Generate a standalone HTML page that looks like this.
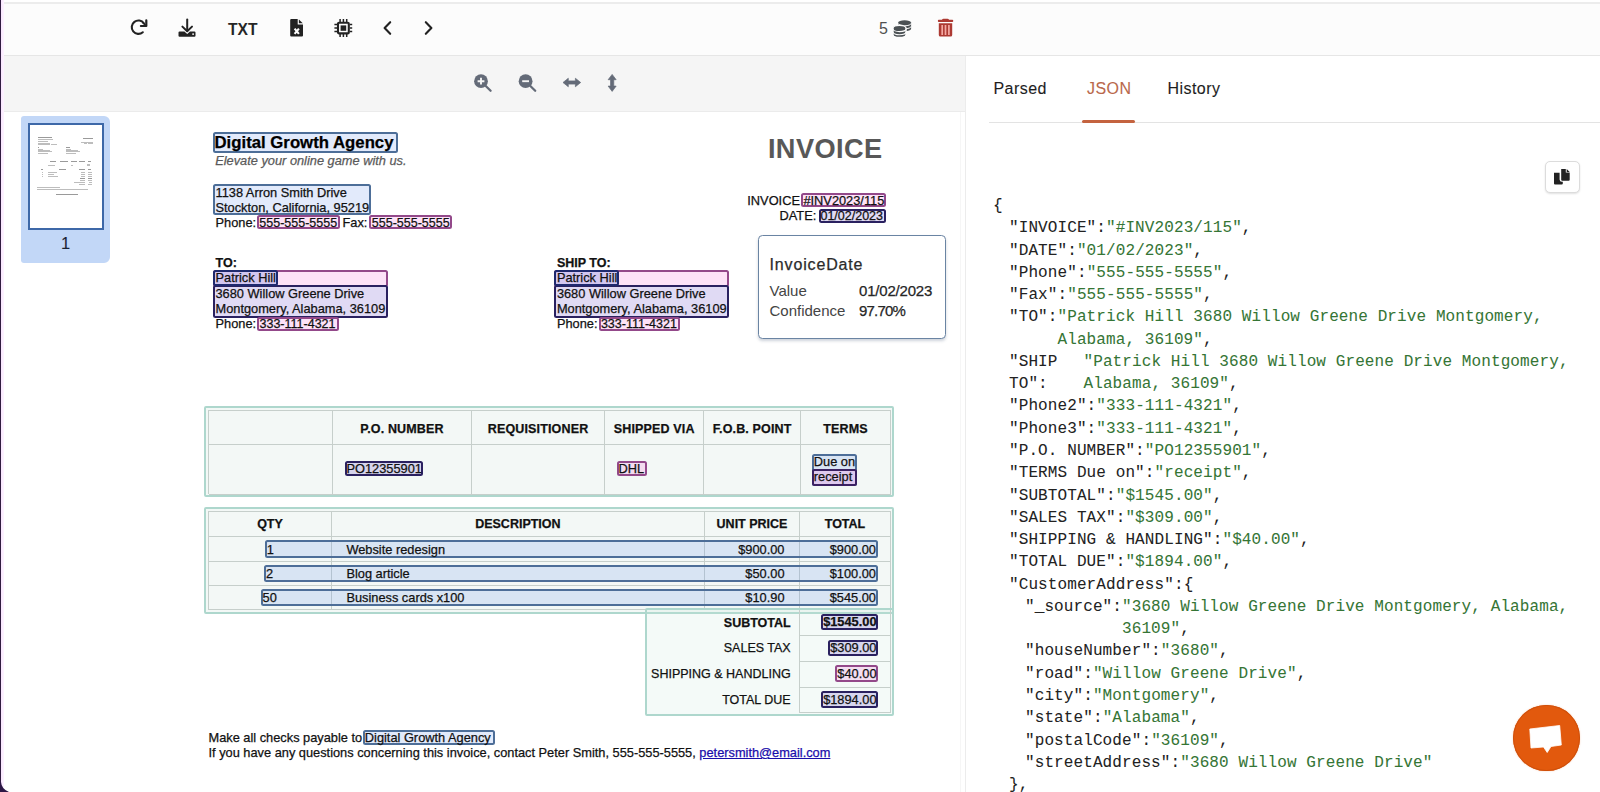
<!DOCTYPE html>
<html><head><meta charset="utf-8">
<style>
*{box-sizing:border-box;margin:0;padding:0}
html,body{width:1600px;height:792px;overflow:hidden;background:#fff;font-family:"Liberation Sans",sans-serif;position:relative}
.a{position:absolute}
#edge0{left:0;top:0;width:1px;height:792px;background:#301c40}
#edge1{left:1px;top:0;width:3px;height:792px;background:linear-gradient(90deg,#fae6ff,#fdf3ff)}
#topline{left:4px;top:2px;width:1596px;height:2px;background:#ececec}
#toolbar{left:3px;top:4px;width:1597px;height:51px;background:#fcfcfc}
#tbborder{left:0;top:55px;width:1600px;height:1px;background:#e6e6e6}
#subtb{left:3px;top:56px;width:962px;height:55px;background:#f5f5f5}
#subtbb{left:3px;top:111px;width:962px;height:1px;background:#ebebeb}
#divider{left:965px;top:56px;width:1px;height:736px;background:#ececec}
.ico{position:absolute;display:block}
.doc{font-family:"Liberation Sans",sans-serif;color:#111;white-space:nowrap}
.t{position:absolute;white-space:nowrap;line-height:1}
.d{-webkit-text-stroke:0.25px currentColor}
.mono{font-family:"Liberation Mono",monospace;font-size:16px;white-space:pre;letter-spacing:0.1px;-webkit-text-stroke:0.05px currentColor}
</style></head>
<body>
<div id="topline" class="a"></div>
<div id="toolbar" class="a"></div>
<div id="tbborder" class="a"></div>
<div id="subtb" class="a"></div>
<div id="subtbb" class="a"></div>
<div id="divider" class="a"></div>
<div class="a" style="left:960px;top:112px;width:1px;height:680px;background:#f6f6f6"></div>

<!-- TOOLBAR ICONS -->
<!-- refresh -->
<svg class="ico" style="left:128px;top:18px" width="20" height="20" viewBox="0 0 20 20">
<g transform="translate(0.7,-0.6)">
<path d="M14.1 14.9 A6.7 6.7 0 1 1 15.2 5.9" fill="none" stroke="#222" stroke-width="2.1" stroke-linecap="round"/>
<path d="M17.6 3 V8.6 H12.2" fill="none" stroke="#222" stroke-width="2.2" stroke-linecap="round" stroke-linejoin="round"/>
<path d="M17.6 8.6 L13.8 4.8" stroke="#222" stroke-width="1.6"/></g>
</svg>
<!-- download -->
<svg class="ico" style="left:177px;top:18px" width="20" height="20" viewBox="0 0 20 20">
<path d="M10.2 1.6 V12.6" stroke="#222" stroke-width="2" stroke-linecap="round" fill="none"/>
<path d="M5.4 8.6 L10.2 13.3 L15 8.6" stroke="#222" stroke-width="2" stroke-linecap="round" stroke-linejoin="round" fill="none"/>
<path d="M2.6 13.4 H7.4 L10.2 15.9 L13 13.4 H17.4 Q18.5 13.4 18.5 14.5 V17.7 Q18.5 18.8 17.4 18.8 H2.6 Q1.5 18.8 1.5 17.7 V14.5 Q1.5 13.4 2.6 13.4 Z" fill="#222"/>
<circle cx="16.1" cy="16.1" r="0.95" fill="#fcfcfc"/>
</svg>
<div class="t" style="left:228px;top:22px;font-size:15.6px;font-weight:bold;color:#262626">TXT</div>
<!-- file excel -->
<svg class="ico" style="left:289px;top:18px" width="16" height="20" viewBox="0 0 16 20">
<path d="M2.2 1 H8.7 V6.5 H14 V17.6 Q14 18.6 13 18.6 H2.2 Q1.2 18.6 1.2 17.6 V2 Q1.2 1 2.2 1 Z" fill="#222"/>
<path d="M9.9 1.4 L13.8 5.3 H9.9 Z" fill="#222"/>
<path d="M5.6 10.6 L9.9 15.8 M9.9 10.6 L5.6 15.8" stroke="#fcfcfc" stroke-width="2.1"/>
</svg>
<!-- chip -->
<svg class="ico" style="left:333px;top:18px" width="20" height="20" viewBox="0 0 20 20">
<rect x="5" y="4.8" width="10.8" height="10.6" rx="1" fill="none" stroke="#222" stroke-width="2.1"/>
<rect x="7.6" y="7.4" width="5.6" height="5.4" fill="#222"/>
<path d="M7.1 1 V4 M10.4 1 V4 M13.7 1 V4 M7.1 16 V19 M10.4 16 V19 M13.7 16 V19 M1.4 6.6 H4 M1.4 10.1 H4 M1.4 13.6 H4 M16.8 6.6 H19.2 M16.8 10.1 H19.2 M16.8 13.6 H19.2" stroke="#222" stroke-width="1.5"/>
</svg>
<!-- chevrons -->
<svg class="ico" style="left:381px;top:19px" width="12" height="18" viewBox="0 0 12 18">
<path d="M9.2 3.2 L3.6 9 L9.2 14.8" fill="none" stroke="#222" stroke-width="2.1" stroke-linecap="round" stroke-linejoin="round"/>
</svg>
<svg class="ico" style="left:423px;top:19px" width="12" height="18" viewBox="0 0 12 18">
<path d="M2.8 3.2 L8.4 9 L2.8 14.8" fill="none" stroke="#222" stroke-width="2.1" stroke-linecap="round" stroke-linejoin="round"/>
</svg>
<!-- 5 coins -->
<div class="t" style="left:879px;top:21px;font-size:16px;color:#505050">5</div>
<svg class="ico" style="left:891px;top:18px" width="22" height="22" viewBox="0 0 22 22">
<path d="M7.1 4.6 A6.5 2.4 0 0 1 20.1 4.6 V10.8 A6.5 2.4 0 0 1 7.1 10.8 Z" fill="#4b5154"/>
<path d="M7.1 5.4 A6.5 2.4 0 0 0 20.1 5.4 M7.1 8.4 A6.5 2.4 0 0 0 20.1 8.4" fill="none" stroke="#fcfcfc" stroke-width="1"/>
<path d="M2 10 A6.5 2.7 0 0 1 15 10 V16.8 A6.5 2.7 0 0 1 2 16.8 Z" fill="#4b5154" stroke="#fcfcfc" stroke-width="1.4"/>
<path d="M2 10.9 A6.5 2.7 0 0 0 15 10.9 M2 14 A6.5 2.7 0 0 0 15 14" fill="none" stroke="#fcfcfc" stroke-width="1.1"/>
</svg>
<!-- trash -->
<svg class="ico" style="left:936px;top:18px" width="19" height="20" viewBox="0 0 19 20">
<path d="M6 2 Q6.3 0.8 7.5 0.8 H11.5 Q12.7 0.8 13 2 Z" fill="#ad3a33"/>
<rect x="1.9" y="1.8" width="15.3" height="2.3" rx="0.8" fill="#ad3a33"/>
<path d="M2.8 5.2 H16.2 V16.9 Q16.2 18.5 14.6 18.5 H4.4 Q2.8 18.5 2.8 16.9 Z" fill="#ad3a33"/>
<path d="M6.2 7 V17 M9.5 7 V17 M12.9 7 V17" stroke="#f4aaa4" stroke-width="1.7"/>
</svg>

<!-- SUB TOOLBAR ICONS -->
<svg class="ico" style="left:472px;top:72px" width="22" height="22" viewBox="0 0 22 22">
<circle cx="9" cy="9.2" r="6.9" fill="#646b78"/>
<path d="M13.5 13.7 L18.6 18.8" stroke="#646b78" stroke-width="2.3" stroke-linecap="round"/>
<path d="M9 5.8 V12.6 M5.6 9.2 H12.4" stroke="#f5f5f5" stroke-width="1.9"/>
</svg>
<svg class="ico" style="left:516px;top:72px" width="22" height="22" viewBox="0 0 22 22">
<circle cx="9.6" cy="9.2" r="6.9" fill="#646b78"/>
<path d="M14.1 13.7 L19.2 18.8" stroke="#646b78" stroke-width="2.3" stroke-linecap="round"/>
<path d="M6.2 9.2 H13" stroke="#f5f5f5" stroke-width="1.9"/>
</svg>
<svg class="ico" style="left:561px;top:76px" width="22" height="14" viewBox="0 0 22 14">
<path d="M2 6.5 L7.3 2.25 V4.9 H14.4 V2.25 L19.7 6.5 L14.4 10.75 V8.1 H7.3 V10.75 Z" fill="#646b78" stroke="#646b78" stroke-width="0.7" stroke-linejoin="round"/>
</svg>
<svg class="ico" style="left:605px;top:72px" width="14" height="22" viewBox="0 0 14 22">
<path d="M7.15 2.4 L11.15 7.7 H8.75 V14.1 H11.15 L7.15 19.4 L3.15 14.1 H5.55 V7.7 H3.15 Z" fill="#646b78" stroke="#646b78" stroke-width="0.7" stroke-linejoin="round"/>
</svg>

<div class="a" style="left:21.00px;top:115.70px;width:89.00px;height:147.80px;background:#c2d7f7;border-radius:3px 6px 6px 3px;"></div>
<div class="a" style="left:28.00px;top:123.00px;width:76.00px;height:106.50px;background:#fff;border:2px solid #3d68a8;"></div>
<div class="a" style="left:37.54px;top:137.25px;width:14.77px;height:1.0px;background:#9a9a9a"></div>
<div class="a" style="left:37.59px;top:138.69px;width:15.79px;height:0.8px;background:#bdbdbd"></div>
<div class="a" style="left:37.62px;top:141.39px;width:10.84px;height:0.8px;background:#bdbdbd"></div>
<div class="a" style="left:37.62px;top:142.62px;width:12.68px;height:0.8px;background:#bdbdbd"></div>
<div class="a" style="left:37.62px;top:143.93px;width:3.35px;height:0.8px;background:#bdbdbd"></div>
<div class="a" style="left:41.23px;top:143.93px;width:6.42px;height:0.8px;background:#bdbdbd"></div>
<div class="a" style="left:48.10px;top:143.93px;width:2.05px;height:0.8px;background:#bdbdbd"></div>
<div class="a" style="left:50.51px;top:143.93px;width:6.42px;height:0.8px;background:#bdbdbd"></div>
<div class="a" style="left:83.42px;top:138.12px;width:9.23px;height:1.0px;background:#9a9a9a"></div>
<div class="a" style="left:81.49px;top:142.07px;width:4.34px;height:0.8px;background:#bdbdbd"></div>
<div class="a" style="left:86.12px;top:142.07px;width:6.67px;height:0.8px;background:#bdbdbd"></div>
<div class="a" style="left:84.15px;top:143.38px;width:3.03px;height:0.8px;background:#bdbdbd"></div>
<div class="a" style="left:87.53px;top:143.38px;width:5.16px;height:0.8px;background:#bdbdbd"></div>
<div class="a" style="left:37.62px;top:147.33px;width:1.76px;height:0.8px;background:#9a9a9a"></div>
<div class="a" style="left:37.62px;top:148.62px;width:4.99px;height:0.8px;background:#bdbdbd"></div>
<div class="a" style="left:37.62px;top:149.93px;width:12.27px;height:0.8px;background:#bdbdbd"></div>
<div class="a" style="left:37.62px;top:151.20px;width:14.01px;height:0.8px;background:#bdbdbd"></div>
<div class="a" style="left:37.62px;top:152.51px;width:3.35px;height:0.8px;background:#bdbdbd"></div>
<div class="a" style="left:41.25px;top:152.51px;width:6.27px;height:0.8px;background:#bdbdbd"></div>
<div class="a" style="left:65.78px;top:147.33px;width:4.43px;height:0.8px;background:#9a9a9a"></div>
<div class="a" style="left:65.78px;top:148.62px;width:4.99px;height:0.8px;background:#bdbdbd"></div>
<div class="a" style="left:65.78px;top:149.93px;width:12.27px;height:0.8px;background:#bdbdbd"></div>
<div class="a" style="left:65.78px;top:151.20px;width:14.01px;height:0.8px;background:#bdbdbd"></div>
<div class="a" style="left:65.78px;top:152.51px;width:3.35px;height:0.8px;background:#bdbdbd"></div>
<div class="a" style="left:69.41px;top:152.51px;width:6.27px;height:0.8px;background:#bdbdbd"></div>
<div class="a" style="left:49.63px;top:161.32px;width:6.74px;height:0.8px;background:#9a9a9a"></div>
<div class="a" style="left:60.16px;top:161.32px;width:8.14px;height:0.8px;background:#9a9a9a"></div>
<div class="a" style="left:70.54px;top:161.32px;width:6.53px;height:0.8px;background:#9a9a9a"></div>
<div class="a" style="left:78.71px;top:161.32px;width:6.36px;height:0.8px;background:#9a9a9a"></div>
<div class="a" style="left:87.79px;top:161.32px;width:3.61px;height:0.8px;background:#9a9a9a"></div>
<div class="a" style="left:48.43px;top:164.72px;width:6.22px;height:0.8px;background:#bdbdbd"></div>
<div class="a" style="left:70.87px;top:164.72px;width:2.11px;height:0.8px;background:#bdbdbd"></div>
<div class="a" style="left:86.98px;top:164.08px;width:3.40px;height:0.8px;background:#bdbdbd"></div>
<div class="a" style="left:86.98px;top:165.39px;width:3.17px;height:0.8px;background:#bdbdbd"></div>
<div class="a" style="left:41.06px;top:169.35px;width:2.12px;height:0.8px;background:#9a9a9a"></div>
<div class="a" style="left:59.04px;top:169.35px;width:7.05px;height:0.8px;background:#9a9a9a"></div>
<div class="a" style="left:78.96px;top:169.35px;width:5.84px;height:0.8px;background:#9a9a9a"></div>
<div class="a" style="left:87.88px;top:169.35px;width:3.34px;height:0.8px;background:#9a9a9a"></div>
<div class="a" style="left:41.84px;top:171.52px;width:0.80px;height:0.8px;background:#bdbdbd"></div>
<div class="a" style="left:48.42px;top:171.52px;width:8.14px;height:0.8px;background:#bdbdbd"></div>
<div class="a" style="left:80.74px;top:171.52px;width:3.82px;height:0.8px;background:#bdbdbd"></div>
<div class="a" style="left:88.29px;top:171.52px;width:3.82px;height:0.8px;background:#bdbdbd"></div>
<div class="a" style="left:41.78px;top:173.59px;width:0.80px;height:0.8px;background:#bdbdbd"></div>
<div class="a" style="left:48.42px;top:173.59px;width:5.22px;height:0.8px;background:#bdbdbd"></div>
<div class="a" style="left:81.33px;top:173.59px;width:3.23px;height:0.8px;background:#bdbdbd"></div>
<div class="a" style="left:88.29px;top:173.59px;width:3.82px;height:0.8px;background:#bdbdbd"></div>
<div class="a" style="left:41.50px;top:175.62px;width:1.17px;height:0.8px;background:#bdbdbd"></div>
<div class="a" style="left:48.42px;top:175.62px;width:9.74px;height:0.8px;background:#bdbdbd"></div>
<div class="a" style="left:81.33px;top:175.62px;width:3.23px;height:0.8px;background:#bdbdbd"></div>
<div class="a" style="left:88.29px;top:175.62px;width:3.82px;height:0.8px;background:#bdbdbd"></div>
<div class="a" style="left:79.55px;top:177.74px;width:5.52px;height:0.8px;background:#9a9a9a"></div>
<div class="a" style="left:79.55px;top:179.88px;width:5.52px;height:0.8px;background:#bdbdbd"></div>
<div class="a" style="left:73.55px;top:182.03px;width:11.52px;height:0.8px;background:#bdbdbd"></div>
<div class="a" style="left:79.42px;top:184.24px;width:5.65px;height:0.8px;background:#bdbdbd"></div>
<div class="a" style="left:87.75px;top:177.69px;width:4.40px;height:0.8px;background:#9a9a9a"></div>
<div class="a" style="left:88.33px;top:179.84px;width:3.82px;height:0.8px;background:#bdbdbd"></div>
<div class="a" style="left:88.92px;top:182.00px;width:3.23px;height:0.8px;background:#bdbdbd"></div>
<div class="a" style="left:87.75px;top:184.19px;width:4.40px;height:0.8px;background:#bdbdbd"></div>
<div class="a" style="left:37.04px;top:187.43px;width:12.68px;height:0.8px;background:#bdbdbd"></div>
<div class="a" style="left:49.94px;top:187.43px;width:10.39px;height:0.8px;background:#bdbdbd"></div>
<div class="a" style="left:37.04px;top:188.75px;width:51.31px;height:0.8px;background:#bdbdbd"></div>
<div class="a" style="left:56px;top:193.5px;width:22px;height:0.8px;background:#9a9a9a"></div>
<div class="t d" style="left:-234.50px;width:600px;text-align:center;top:235.00px;font-size:16.5px;font-weight:normal;font-style:normal;color:#1c2333;-webkit-text-stroke:0.1px currentColor">1</div>
<div class="a" style="left:213.10px;top:132.30px;width:184.70px;height:20.60px;border:2px solid #4d6e98;background:rgba(110,150,235,0.2);border-radius:2.5px;"></div>
<div class="t d" style="left:214.50px;top:135.00px;font-size:16.75px;font-weight:bold;font-style:normal;color:#000;">Digital Growth Agency</div>
<div class="t d" style="left:215.20px;top:155.00px;font-size:12.8px;font-weight:normal;font-style:italic;color:#5a5a5a;">Elevate your online game with us.</div>
<div class="a" style="left:213.10px;top:184.10px;width:157.90px;height:31.30px;border:2px solid #4d6e98;background:rgba(110,150,235,0.2);border-radius:2.5px;"></div>
<div class="t d" style="left:215.50px;top:187.00px;font-size:12.8px;font-weight:normal;font-style:normal;color:#111;">1138 Arron Smith Drive</div>
<div class="t d" style="left:215.50px;top:202.00px;font-size:12.8px;font-weight:normal;font-style:normal;color:#111;">Stockton, California, 95219</div>
<div class="a" style="left:256.90px;top:215.20px;width:83.60px;height:14.20px;border:2px solid #93498a;background:rgba(245,110,215,0.2);border-radius:2.5px;"></div>
<div class="a" style="left:368.50px;top:215.20px;width:83.50px;height:14.20px;border:2px solid #93498a;background:rgba(245,110,215,0.2);border-radius:2.5px;"></div>
<div class="t d" style="left:215.50px;top:217.00px;font-size:12.8px;font-weight:normal;font-style:normal;color:#111;">Phone:</div>
<div class="t d" style="left:259.30px;top:217.00px;font-size:12.5px;font-weight:normal;font-style:normal;color:#111;">555-555-5555</div>
<div class="t d" style="left:342.50px;top:217.00px;font-size:12.8px;font-weight:normal;font-style:normal;color:#111;">Fax:</div>
<div class="t d" style="left:371.80px;top:217.00px;font-size:12.5px;font-weight:normal;font-style:normal;color:#111;">555-555-5555</div>
<div class="t d" style="right:717.50px;top:135.00px;font-size:27.2px;font-weight:bold;font-style:normal;color:#585858;letter-spacing:0.4px;-webkit-text-stroke:0">INVOICE</div>
<div class="a" style="left:800.50px;top:193.00px;width:85.00px;height:13.80px;border:2px solid #93498a;background:rgba(245,110,215,0.2);border-radius:2.5px;"></div>
<div class="a" style="left:818.50px;top:209.00px;width:67.00px;height:13.80px;border:2px solid #2a2160;background:rgba(100,70,200,0.2);border-radius:2.5px;"></div>
<div class="t d" style="left:747.30px;top:195.00px;font-size:12.8px;font-weight:normal;font-style:normal;color:#111;">INVOICE</div>
<div class="t d" style="right:715.70px;top:195.00px;font-size:12.8px;font-weight:normal;font-style:normal;color:#111;">#INV2023/115</div>
<div class="t d" style="left:779.50px;top:210.00px;font-size:12.8px;font-weight:normal;font-style:normal;color:#111;">DATE:</div>
<div class="t d" style="right:717.00px;top:210.00px;font-size:12.5px;font-weight:normal;font-style:normal;color:#111;">01/02/2023</div>
<div class="t d" style="left:215.50px;top:257.00px;font-size:12.5px;font-weight:bold;font-style:normal;color:#111;">TO:</div>
<div class="a" style="left:213.00px;top:270.00px;width:175.00px;height:17.00px;border:2px solid #93498a;background:rgba(245,110,215,0.2);border-radius:2.5px;"></div>
<div class="a" style="left:213.00px;top:285.20px;width:174.60px;height:32.60px;border:2px solid #2a2160;background:rgba(100,70,200,0.2);border-radius:2.5px;"></div>
<div class="a" style="left:213.00px;top:270.00px;width:64.80px;height:16.20px;border:2px solid #1f2a6e;background:rgba(60,100,220,0.22);border-radius:2.5px;"></div>
<div class="t d" style="left:215.50px;top:272.00px;font-size:12.8px;font-weight:normal;font-style:normal;color:#111;">Patrick Hill</div>
<div class="t d" style="left:215.50px;top:288.00px;font-size:12.8px;font-weight:normal;font-style:normal;color:#111;">3680 Willow Greene Drive</div>
<div class="t d" style="left:215.50px;top:303.00px;font-size:12.8px;font-weight:normal;font-style:normal;color:#111;">Montgomery, Alabama, 36109</div>
<div class="a" style="left:257.20px;top:317.40px;width:81.80px;height:13.80px;border:2px solid #93498a;background:rgba(245,110,215,0.2);border-radius:2.5px;"></div>
<div class="t d" style="left:215.50px;top:318.00px;font-size:12.8px;font-weight:normal;font-style:normal;color:#111;">Phone:</div>
<div class="t d" style="left:259.50px;top:318.00px;font-size:12.5px;font-weight:normal;font-style:normal;color:#111;">333-111-4321</div>
<div class="t d" style="left:556.90px;top:257.00px;font-size:12.5px;font-weight:bold;font-style:normal;color:#111;">SHIP TO:</div>
<div class="a" style="left:554.40px;top:270.00px;width:175.00px;height:17.00px;border:2px solid #93498a;background:rgba(245,110,215,0.2);border-radius:2.5px;"></div>
<div class="a" style="left:554.40px;top:285.20px;width:174.60px;height:32.60px;border:2px solid #2a2160;background:rgba(100,70,200,0.2);border-radius:2.5px;"></div>
<div class="a" style="left:554.40px;top:270.00px;width:64.80px;height:16.20px;border:2px solid #1f2a6e;background:rgba(60,100,220,0.22);border-radius:2.5px;"></div>
<div class="t d" style="left:556.90px;top:272.00px;font-size:12.8px;font-weight:normal;font-style:normal;color:#111;">Patrick Hill</div>
<div class="t d" style="left:556.90px;top:288.00px;font-size:12.8px;font-weight:normal;font-style:normal;color:#111;">3680 Willow Greene Drive</div>
<div class="t d" style="left:556.90px;top:303.00px;font-size:12.8px;font-weight:normal;font-style:normal;color:#111;">Montgomery, Alabama, 36109</div>
<div class="a" style="left:598.60px;top:317.40px;width:81.80px;height:13.80px;border:2px solid #93498a;background:rgba(245,110,215,0.2);border-radius:2.5px;"></div>
<div class="t d" style="left:556.90px;top:318.00px;font-size:12.8px;font-weight:normal;font-style:normal;color:#111;">Phone:</div>
<div class="t d" style="left:600.90px;top:318.00px;font-size:12.5px;font-weight:normal;font-style:normal;color:#111;">333-111-4321</div>
<div class="a" style="left:757.50px;top:235.00px;width:188.70px;height:103.80px;background:#fff;border:1.6px solid #6a84a3;border-radius:4.5px;box-shadow:0 2px 3px rgba(60,80,110,0.25);"></div>
<div class="t d" style="left:769.50px;top:257.00px;font-size:16px;font-weight:normal;font-style:normal;color:#2b2b2b;letter-spacing:0.85px">InvoiceDate</div>
<div class="t d" style="left:769.50px;top:283.00px;font-size:15px;font-weight:normal;font-style:normal;color:#444;-webkit-text-stroke:0">Value</div>
<div class="t d" style="left:859.00px;top:283.00px;font-size:15px;font-weight:normal;font-style:normal;color:#262626;letter-spacing:-0.2px">01/02/2023</div>
<div class="t d" style="left:769.50px;top:303.00px;font-size:15px;font-weight:normal;font-style:normal;color:#444;-webkit-text-stroke:0">Confidence</div>
<div class="t d" style="left:859.00px;top:303.00px;font-size:15px;font-weight:normal;font-style:normal;color:#262626;letter-spacing:-0.8px">97.70%</div>
<div class="a" style="left:204.40px;top:405.70px;width:689.80px;height:90.90px;border:2px solid #aed7cd;background:#f3f8f6;border-radius:2px;"></div>
<div class="a" style="left:208.60px;top:410.10px;width:682.20px;height:1.00px;background:#c6cfcb;"></div>
<div class="a" style="left:208.60px;top:444.30px;width:682.20px;height:1.00px;background:#c6cfcb;"></div>
<div class="a" style="left:208.60px;top:493.50px;width:682.20px;height:1.00px;background:#c6cfcb;"></div>
<div class="a" style="left:208.10px;top:410.10px;width:1.00px;height:84.40px;background:#c6cfcb;"></div>
<div class="a" style="left:890.30px;top:410.10px;width:1.00px;height:84.40px;background:#c6cfcb;"></div>
<div class="a" style="left:331.80px;top:410.10px;width:1.00px;height:84.40px;background:#c6cfcb;"></div>
<div class="a" style="left:471.20px;top:410.10px;width:1.00px;height:84.40px;background:#c6cfcb;"></div>
<div class="a" style="left:603.90px;top:410.10px;width:1.00px;height:84.40px;background:#c6cfcb;"></div>
<div class="a" style="left:703.40px;top:410.10px;width:1.00px;height:84.40px;background:#c6cfcb;"></div>
<div class="a" style="left:799.80px;top:410.10px;width:1.00px;height:84.40px;background:#c6cfcb;"></div>
<div class="t d" style="left:102.00px;width:600px;text-align:center;top:423.00px;font-size:12.5px;font-weight:bold;font-style:normal;color:#111;letter-spacing:0.15px">P.O. NUMBER</div>
<div class="t d" style="left:238.05px;width:600px;text-align:center;top:423.00px;font-size:12.5px;font-weight:bold;font-style:normal;color:#111;letter-spacing:0.15px">REQUISITIONER</div>
<div class="t d" style="left:354.15px;width:600px;text-align:center;top:423.00px;font-size:12.5px;font-weight:bold;font-style:normal;color:#111;letter-spacing:0.15px">SHIPPED VIA</div>
<div class="t d" style="left:452.10px;width:600px;text-align:center;top:423.00px;font-size:12.5px;font-weight:bold;font-style:normal;color:#111;letter-spacing:0.15px">F.O.B. POINT</div>
<div class="t d" style="left:545.55px;width:600px;text-align:center;top:423.00px;font-size:12.5px;font-weight:bold;font-style:normal;color:#111;letter-spacing:0.15px">TERMS</div>
<div class="a" style="left:345.00px;top:461.00px;width:77.80px;height:14.60px;border:2px solid #2a2160;background:rgba(100,70,200,0.2);border-radius:2.5px;"></div>
<div class="t d" style="left:346.50px;top:463.00px;font-size:12.8px;font-weight:normal;font-style:normal;color:#111;">PO12355901</div>
<div class="a" style="left:617.20px;top:461.00px;width:29.80px;height:14.60px;border:2px solid #93498a;background:rgba(245,110,215,0.2);border-radius:2.5px;"></div>
<div class="t d" style="left:618.60px;top:463.00px;font-size:12.8px;font-weight:normal;font-style:normal;color:#111;">DHL</div>
<div class="a" style="left:812.20px;top:453.60px;width:45.00px;height:32.00px;border:2px solid #4d6e98;background:rgba(110,150,235,0.2);border-radius:2.5px;"></div>
<div class="a" style="left:812.20px;top:468.80px;width:45.00px;height:16.80px;border:2px solid #3b2163;background:rgba(240,120,225,0.25);border-radius:2.5px;"></div>
<div class="t d" style="left:813.80px;top:456.00px;font-size:12.8px;font-weight:normal;font-style:normal;color:#111;">Due on</div>
<div class="t d" style="left:813.80px;top:471.00px;font-size:12.8px;font-weight:normal;font-style:normal;color:#111;">receipt</div>
<div class="a" style="left:204.40px;top:507.00px;width:689.80px;height:106.90px;border:2px solid #aed7cd;background:#f3f8f6;border-radius:2px;"></div>
<div class="a" style="left:208.60px;top:510.60px;width:682.20px;height:1.00px;background:#c6cfcb;"></div>
<div class="a" style="left:208.60px;top:536.20px;width:682.20px;height:1.00px;background:#c6cfcb;"></div>
<div class="a" style="left:208.60px;top:560.50px;width:682.20px;height:1.00px;background:#c6cfcb;"></div>
<div class="a" style="left:208.60px;top:585.10px;width:682.20px;height:1.00px;background:#c6cfcb;"></div>
<div class="a" style="left:208.60px;top:609.20px;width:682.20px;height:1.00px;background:#c6cfcb;"></div>
<div class="a" style="left:208.10px;top:510.60px;width:1.00px;height:99.60px;background:#c6cfcb;"></div>
<div class="a" style="left:890.30px;top:510.60px;width:1.00px;height:99.60px;background:#c6cfcb;"></div>
<div class="a" style="left:330.90px;top:510.60px;width:1.00px;height:99.60px;background:#c6cfcb;"></div>
<div class="a" style="left:703.90px;top:510.60px;width:1.00px;height:99.60px;background:#c6cfcb;"></div>
<div class="a" style="left:799.20px;top:510.60px;width:1.00px;height:99.60px;background:#c6cfcb;"></div>
<div class="t d" style="left:-30.00px;width:600px;text-align:center;top:518.00px;font-size:12.5px;font-weight:bold;font-style:normal;color:#111;">QTY</div>
<div class="t d" style="left:217.90px;width:600px;text-align:center;top:518.00px;font-size:12.5px;font-weight:bold;font-style:normal;color:#111;">DESCRIPTION</div>
<div class="t d" style="left:452.00px;width:600px;text-align:center;top:518.00px;font-size:12.5px;font-weight:bold;font-style:normal;color:#111;">UNIT PRICE</div>
<div class="t d" style="left:545.00px;width:600px;text-align:center;top:518.00px;font-size:12.5px;font-weight:bold;font-style:normal;color:#111;">TOTAL</div>
<div class="a" style="left:264.70px;top:540.30px;width:613.30px;height:18.00px;border:2px solid #4d6e98;background:rgba(110,150,235,0.2);border-radius:2.5px;"></div>
<div class="t d" style="left:266.70px;top:544.00px;font-size:12.8px;font-weight:normal;font-style:normal;color:#111;">1</div>
<div class="t d" style="left:346.40px;top:544.00px;font-size:12.8px;font-weight:normal;font-style:normal;color:#111;">Website redesign</div>
<div class="t d" style="right:815.50px;top:544.00px;font-size:12.8px;font-weight:normal;font-style:normal;color:#111;">$900.00</div>
<div class="t d" style="right:724.00px;top:544.00px;font-size:12.8px;font-weight:normal;font-style:normal;color:#111;">$900.00</div>
<div class="a" style="left:263.90px;top:564.70px;width:614.10px;height:17.80px;border:2px solid #4d6e98;background:rgba(110,150,235,0.2);border-radius:2.5px;"></div>
<div class="t d" style="left:265.90px;top:568.00px;font-size:12.8px;font-weight:normal;font-style:normal;color:#111;">2</div>
<div class="t d" style="left:346.40px;top:568.00px;font-size:12.8px;font-weight:normal;font-style:normal;color:#111;">Blog article</div>
<div class="t d" style="right:815.50px;top:568.00px;font-size:12.8px;font-weight:normal;font-style:normal;color:#111;">$50.00</div>
<div class="t d" style="right:724.00px;top:568.00px;font-size:12.8px;font-weight:normal;font-style:normal;color:#111;">$100.00</div>
<div class="a" style="left:260.60px;top:589.40px;width:617.40px;height:16.20px;border:2px solid #4d6e98;background:rgba(110,150,235,0.2);border-radius:2.5px;"></div>
<div class="t d" style="left:262.60px;top:592.00px;font-size:12.8px;font-weight:normal;font-style:normal;color:#111;">50</div>
<div class="t d" style="left:346.40px;top:592.00px;font-size:12.8px;font-weight:normal;font-style:normal;color:#111;">Business cards x100</div>
<div class="t d" style="right:815.50px;top:592.00px;font-size:12.8px;font-weight:normal;font-style:normal;color:#111;">$10.90</div>
<div class="t d" style="right:724.00px;top:592.00px;font-size:12.8px;font-weight:normal;font-style:normal;color:#111;">$545.00</div>
<div class="a" style="left:644.90px;top:607.90px;width:249.40px;height:108.00px;border:2px solid #aed7cd;background:rgba(200,230,220,0.2);border-radius:2px;"></div>
<div class="a" style="left:798.90px;top:610.00px;width:1.00px;height:103.00px;background:#c6cfcb;"></div>
<div class="a" style="left:890.30px;top:610.00px;width:1.00px;height:103.00px;background:#c6cfcb;"></div>
<div class="a" style="left:799.40px;top:635.40px;width:91.40px;height:1.00px;background:#c6cfcb;"></div>
<div class="a" style="left:799.40px;top:660.80px;width:91.40px;height:1.00px;background:#c6cfcb;"></div>
<div class="a" style="left:799.40px;top:686.50px;width:91.40px;height:1.00px;background:#c6cfcb;"></div>
<div class="a" style="left:799.40px;top:712.40px;width:91.40px;height:1.00px;background:#c6cfcb;"></div>
<div class="t d" style="right:809.30px;top:617.00px;font-size:12.5px;font-weight:bold;font-style:normal;color:#111;">SUBTOTAL</div>
<div class="t d" style="right:809.30px;top:642.00px;font-size:12.5px;font-weight:normal;font-style:normal;color:#111;">SALES TAX</div>
<div class="t d" style="right:809.30px;top:668.00px;font-size:12.5px;font-weight:normal;font-style:normal;color:#111;">SHIPPING &amp; HANDLING</div>
<div class="t d" style="right:809.30px;top:694.00px;font-size:12.5px;font-weight:normal;font-style:normal;color:#111;">TOTAL DUE</div>
<div class="a" style="left:820.80px;top:614.00px;width:57.70px;height:16.10px;border:2px solid #2a2160;background:rgba(100,70,200,0.2);border-radius:2.5px;"></div>
<div class="a" style="left:827.80px;top:640.00px;width:50.70px;height:16.00px;border:2px solid #2a2160;background:rgba(100,70,200,0.2);border-radius:2.5px;"></div>
<div class="a" style="left:834.80px;top:665.10px;width:43.70px;height:16.60px;border:2px solid #93498a;background:rgba(245,110,215,0.2);border-radius:2.5px;"></div>
<div class="a" style="left:820.80px;top:691.40px;width:57.70px;height:16.20px;border:2px solid #2a2160;background:rgba(100,70,200,0.2);border-radius:2.5px;"></div>
<div class="t d" style="right:723.50px;top:616.00px;font-size:12.8px;font-weight:bold;font-style:normal;color:#111;">$1545.00</div>
<div class="t d" style="right:723.50px;top:642.00px;font-size:12.8px;font-weight:normal;font-style:normal;color:#111;">$309.00</div>
<div class="t d" style="right:723.50px;top:668.00px;font-size:12.8px;font-weight:normal;font-style:normal;color:#111;">$40.00</div>
<div class="t d" style="right:723.50px;top:694.00px;font-size:12.8px;font-weight:normal;font-style:normal;color:#111;">$1894.00</div>
<div class="a" style="left:363.20px;top:729.60px;width:131.70px;height:15.60px;border:2px solid #4d6e98;background:rgba(110,150,235,0.2);border-radius:2.5px;"></div>
<div class="t d" style="left:208.50px;top:732.00px;font-size:12.8px;font-weight:normal;font-style:normal;color:#111;">Make all checks payable to</div>
<div class="t d" style="left:364.80px;top:732.00px;font-size:12.8px;font-weight:normal;font-style:normal;color:#111;">Digital Growth Agency</div>
<div class="t d" style="left:208.50px;top:747.00px;font-size:12.8px;font-weight:normal;font-style:normal;color:#111;">If you have any questions concerning this invoice, contact Peter Smith, 555-555-5555, <span style="color:#1a0dab;text-decoration:underline">petersmith@email.com</span></div>
<div class="t" style="left:993.5px;top:81px;font-size:16px;color:#1e1e1e;letter-spacing:0.45px;-webkit-text-stroke:0.1px currentColor">Parsed</div>
<div class="t" style="left:1087px;top:81px;font-size:16px;color:#b9684b;letter-spacing:0.45px;-webkit-text-stroke:0.1px currentColor">JSON</div>
<div class="t" style="left:1167.5px;top:81px;font-size:16px;color:#1e1e1e;letter-spacing:0.45px;-webkit-text-stroke:0.1px currentColor">History</div>
<div class="a" style="left:989px;top:122px;width:611px;height:1px;background:#e3e3e3"></div>
<div class="a" style="left:1081.5px;top:120px;width:53.5px;height:3px;background:#c4633f;border-radius:2px"></div>
<div class="a" style="left:1544.5px;top:161.2px;width:35px;height:32.2px;background:#fff;border:1px solid #dcdcdc;border-radius:5px;box-shadow:0 1px 2px rgba(0,0,0,0.12)"></div>
<svg class="ico" style="left:1553px;top:168px" width="18" height="18" viewBox="0 0 18 18">
<path d="M1 4.8 H6.6 V11.5 Q6.6 13.8 8.9 13.8 H9.8 V15.5 Q9.8 16.5 8.8 16.5 H2 Q1 16.5 1 15.5 Z" fill="#222"/>
<path d="M8.2 1 H12.8 V4.6 H16.7 V11.7 Q16.7 12.7 15.7 12.7 H9.2 Q8.2 12.7 8.2 11.7 Z" fill="#222"/>
<path d="M13.7 1 L16.7 3.9 H13.7 Z" fill="#222"/>
</svg>
<div class="t mono" style="left:993.00px;top:198.00px"><span style="color:#222">{</span></div>
<div class="t mono" style="left:1009.00px;top:220.00px"><span style="color:#222">"INVOICE":</span><span style="color:#357535">"#INV2023/115"</span><span style="color:#222">,</span></div>
<div class="t mono" style="left:1009.00px;top:243.00px"><span style="color:#222">"DATE":</span><span style="color:#357535">"01/02/2023"</span><span style="color:#222">,</span></div>
<div class="t mono" style="left:1009.00px;top:265.00px"><span style="color:#222">"Phone":</span><span style="color:#357535">"555-555-5555"</span><span style="color:#222">,</span></div>
<div class="t mono" style="left:1009.00px;top:287.00px"><span style="color:#222">"Fax":</span><span style="color:#357535">"555-555-5555"</span><span style="color:#222">,</span></div>
<div class="t mono" style="left:1009.00px;top:309.00px"><span style="color:#222">"TO":</span><span style="color:#357535">"Patrick Hill 3680 Willow Greene Drive Montgomery,</span></div>
<div class="t mono" style="left:1057.50px;top:332.00px"><span style="color:#357535">Alabama, 36109"</span><span style="color:#222">,</span></div>
<div class="t mono" style="left:1009.00px;top:354.00px"><span style="color:#222">"SHIP</span></div>
<div class="t mono" style="left:1009.00px;top:376.00px"><span style="color:#222">TO":</span></div>
<div class="t mono" style="left:1009.00px;top:398.00px"><span style="color:#222">"Phone2":</span><span style="color:#357535">"333-111-4321"</span><span style="color:#222">,</span></div>
<div class="t mono" style="left:1009.00px;top:421.00px"><span style="color:#222">"Phone3":</span><span style="color:#357535">"333-111-4321"</span><span style="color:#222">,</span></div>
<div class="t mono" style="left:1009.00px;top:443.00px"><span style="color:#222">"P.O. NUMBER":</span><span style="color:#357535">"PO12355901"</span><span style="color:#222">,</span></div>
<div class="t mono" style="left:1009.00px;top:465.00px"><span style="color:#222">"TERMS Due on":</span><span style="color:#357535">"receipt"</span><span style="color:#222">,</span></div>
<div class="t mono" style="left:1009.00px;top:488.00px"><span style="color:#222">"SUBTOTAL":</span><span style="color:#357535">"$1545.00"</span><span style="color:#222">,</span></div>
<div class="t mono" style="left:1009.00px;top:510.00px"><span style="color:#222">"SALES TAX":</span><span style="color:#357535">"$309.00"</span><span style="color:#222">,</span></div>
<div class="t mono" style="left:1009.00px;top:532.00px"><span style="color:#222">"SHIPPING &amp; HANDLING":</span><span style="color:#357535">"$40.00"</span><span style="color:#222">,</span></div>
<div class="t mono" style="left:1009.00px;top:554.00px"><span style="color:#222">"TOTAL DUE":</span><span style="color:#357535">"$1894.00"</span><span style="color:#222">,</span></div>
<div class="t mono" style="left:1009.00px;top:577.00px"><span style="color:#222">"CustomerAddress":{</span></div>
<div class="t mono" style="left:1025.00px;top:599.00px"><span style="color:#222">"_source":</span><span style="color:#357535">"3680 Willow Greene Drive Montgomery, Alabama,</span></div>
<div class="t mono" style="left:1122.00px;top:621.00px"><span style="color:#357535">36109"</span><span style="color:#222">,</span></div>
<div class="t mono" style="left:1025.00px;top:643.00px"><span style="color:#222">"houseNumber":</span><span style="color:#357535">"3680"</span><span style="color:#222">,</span></div>
<div class="t mono" style="left:1025.00px;top:666.00px"><span style="color:#222">"road":</span><span style="color:#357535">"Willow Greene Drive"</span><span style="color:#222">,</span></div>
<div class="t mono" style="left:1025.00px;top:688.00px"><span style="color:#222">"city":</span><span style="color:#357535">"Montgomery"</span><span style="color:#222">,</span></div>
<div class="t mono" style="left:1025.00px;top:710.00px"><span style="color:#222">"state":</span><span style="color:#357535">"Alabama"</span><span style="color:#222">,</span></div>
<div class="t mono" style="left:1025.00px;top:733.00px"><span style="color:#222">"postalCode":</span><span style="color:#357535">"36109"</span><span style="color:#222">,</span></div>
<div class="t mono" style="left:1025.00px;top:755.00px"><span style="color:#222">"streetAddress":</span><span style="color:#357535">"3680 Willow Greene Drive"</span></div>
<div class="t mono" style="left:1009.00px;top:777.00px"><span style="color:#222">},</span></div>
<div class="t mono" style="left:1083.50px;top:354.00px"><span style="color:#357535">"Patrick Hill 3680 Willow Greene Drive Montgomery,</span></div>
<div class="t mono" style="left:1083.50px;top:376.00px"><span style="color:#357535">Alabama, 36109"</span><span style="color:#222">,</span></div>
<div class="a" style="left:1513px;top:704.7px;width:66.5px;height:66.5px;border-radius:50%;background:#e2590d;box-shadow:inset 0 0 0 1px #cf500b,0 0 2px rgba(226,89,13,0.3)"></div>
<svg class="ico" style="left:1526px;top:716px" width="40" height="42" viewBox="0 0 40 42">
<path d="M3.8 13 L33.7 9.5 L35.3 29 L25 30.5 L21.2 36.5 L17.5 31 L5 32 Z" fill="#fff" stroke="#fff" stroke-width="0.8" stroke-linejoin="round"/>
</svg>
<div id="edge1" class="a"></div><div id="edge0" class="a"></div>
<svg class="ico" style="left:0;top:782px" width="12" height="10" viewBox="0 0 12 10"><path d="M0 0 H1 Q1.5 7 9 10 H0 Z" fill="#2c1745"/></svg>
</body></html>
